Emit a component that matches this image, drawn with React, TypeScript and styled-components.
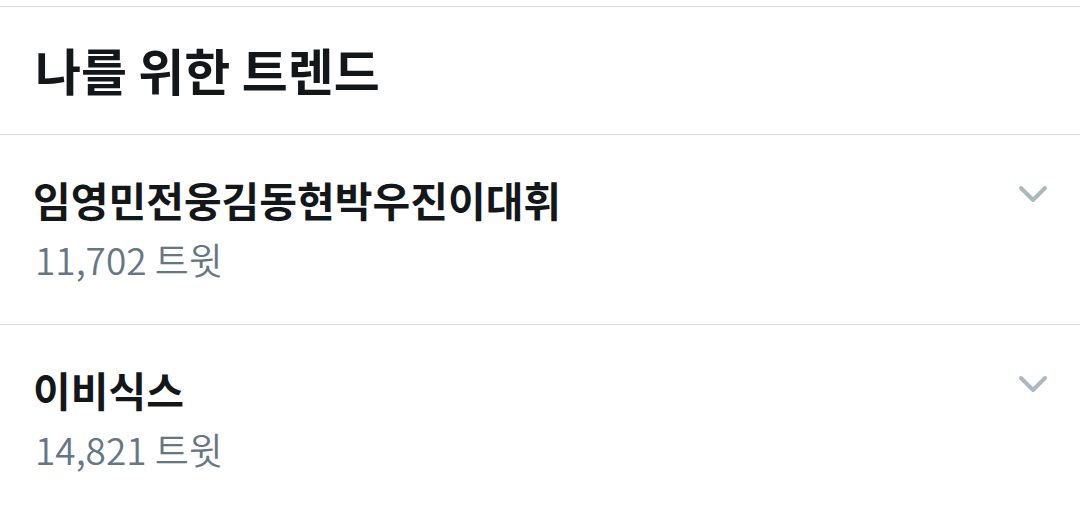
import React from "react";
import styled, { createGlobalStyle } from "styled-components";

const GlobalStyle = createGlobalStyle`
  html, body {
    margin: 0;
    padding: 0;
    background: #ffffff;
  }
  body {
    font-family: "Noto Sans CJK KR", "Noto Sans", sans-serif;
    -webkit-font-smoothing: antialiased;
  }
`;

const SPage = styled.div`
  padding-top: 6px;
  width: 1080px;
  height: 513px;
  overflow: hidden;
  box-sizing: border-box;
`;

const SHeader = styled.div`
  display: flex;
  align-items: center;
  height: 129px;
  padding: 0 36px 4px 35px;
  box-sizing: border-box;
  border-top: 1px solid #d5dde3;
  border-bottom: 1px solid #d5dde3;
  font-size: 50px;
  font-weight: 700;
  color: #14171a;
`;

const SRow = styled.div`
  display: flex;
  align-items: flex-start;
  justify-content: space-between;
  height: 190px;
  box-sizing: border-box;
  padding: 36px 32px 0 33px;
  border-bottom: 1px solid #d5dde3;
`;

const SText = styled.div`
  display: flex;
  flex-direction: column;
`;

const STitle = styled.div`
  font-size: 41px;
  font-weight: 700;
  line-height: 56px;
  color: #14171a;
`;

const SCount = styled.div`
  font-size: 37px;
  font-weight: 350;
  line-height: 58px;
  padding-top: 3px;
  color: #657786;
  padding-left: 2px;
`;

const SChevron = styled.svg`
  width: 30px;
  height: 20px;
  margin-top: 14px;
  flex-shrink: 0;
`;

type Trend = { name: string; tweets: string };

const trends: Trend[] = [
  { name: "임영민전웅김동현박우진이대휘", tweets: "11,702" },
  { name: "이비식스", tweets: "14,821" },
];

function Chevron() {
  return (
    <SChevron viewBox="0 0 30 20">
      <polyline
        points="3,3 15,15 27,3"
        fill="none"
        stroke="#aab8c2"
        strokeWidth="4"
        strokeLinecap="round"
        strokeLinejoin="round"
      />
    </SChevron>
  );
}

export default function App() {
  return (
    <>
      <GlobalStyle />
      <SPage>
        <SHeader>나를 위한 트렌드</SHeader>
        {trends.map((t) => (
          <SRow key={t.name}>
            <SText>
              <STitle>{t.name}</STitle>
              <SCount>{t.tweets} 트윗</SCount>
            </SText>
            <Chevron />
          </SRow>
        ))}
      </SPage>
    </>
  );
}
